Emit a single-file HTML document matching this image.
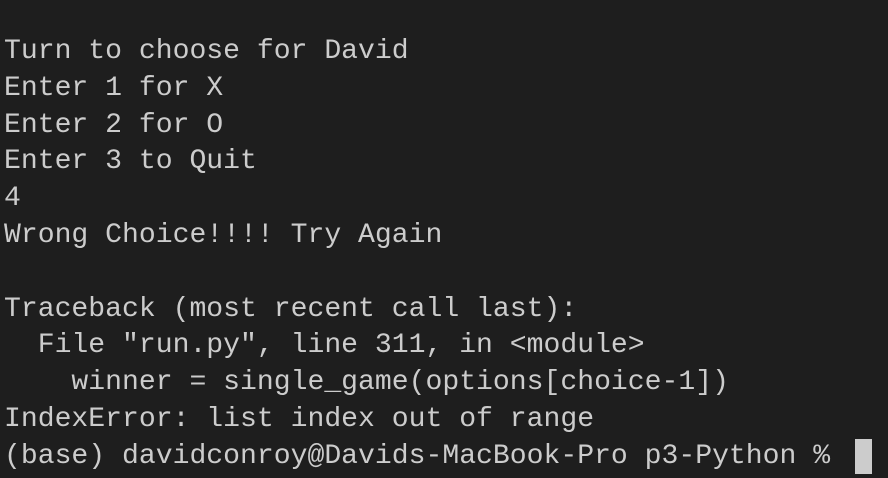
<!DOCTYPE html>
<html><head><style>
html,body{margin:0;padding:0;background:#1e1e1e;width:888px;height:478px;overflow:hidden}
pre{position:absolute;left:4px;top:34px;margin:0;font-family:"Liberation Mono",monospace;font-size:28.1px;line-height:36.8px;color:#cccccc;letter-spacing:0}
.cur{position:absolute;left:855px;top:439px;width:17px;height:35px;background:#cccccc}
</style></head><body>
<pre>Turn to choose for David
Enter 1 for X
Enter 2 for O
Enter 3 to Quit
4
Wrong Choice!!!! Try Again

Traceback (most recent call last):
  File "run.py", line 311, in &lt;module&gt;
    winner = single_game(options[choice-1])
IndexError: list index out of range
(base) davidconroy@Davids-MacBook-Pro p3-Python % </pre>
<div class="cur"></div>
</body></html>
